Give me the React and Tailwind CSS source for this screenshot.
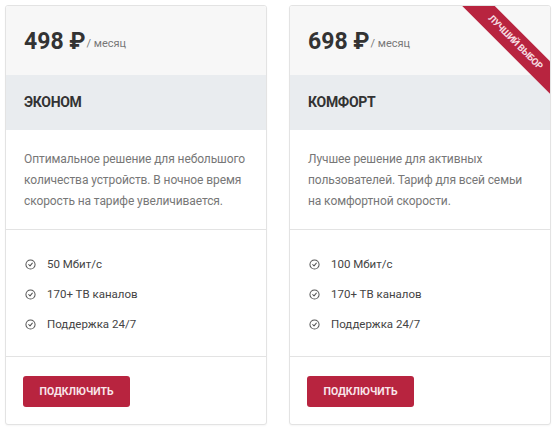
import React from "react";

function Check() {
  return (
    <svg width="11" height="11" viewBox="0 0 24 24" fill="none" stroke="#555" strokeWidth="2.2" strokeLinecap="round" strokeLinejoin="round">
      <circle cx="12" cy="12" r="10" />
      <path d="m8 12 3 3 5-6" />
    </svg>
  );
}

function Card({ price, title, lines, speed, best }) {
  return (
    <div className="relative flex h-[420px] w-[262px] flex-col overflow-hidden rounded-[3px] border border-[#e3e3e3] bg-white shadow-[0_1px_2px_rgba(0,0,0,0.04)]">
      {best && (
        <div className="absolute left-[155px] top-[25px] flex h-[23px] w-[140px] rotate-45 items-center justify-center bg-[#b8243f] text-[9.5px] font-bold uppercase tracking-[-0.4px] text-[#f6dde2]">
          Лучший выбор
        </div>
      )}
      <div className="flex h-[69px] items-center bg-[#f7f7f7] px-[18px] pt-[2px]">
        <span className="text-[23px] font-bold leading-none text-[#333]">{price} ₽</span>
        <span className="ml-[1px] self-center pt-[6px] text-[11px] text-[#777]">/ месяц</span>
      </div>
      <div className="flex h-[55px] items-center bg-[#e9ecef] px-[18px]">
        <span className="text-[14px] font-bold tracking-[-0.3px] text-[#333]">{title}</span>
      </div>
      <div className="h-[100px] whitespace-nowrap border-b border-[#e3e3e3] pl-[18px] pr-[6px] pt-[19px] text-[12px] leading-[21px] tracking-[-0.1px] text-[#777]">
        {lines.map((l) => (
          <div key={l}>{l}</div>
        ))}
      </div>
      <div className="flex h-[127px] flex-col gap-[13px] border-b border-[#e3e3e3] px-[19px] pt-[26px] text-[11.5px] text-[#444]">
        {[speed, "170+ ТВ каналов", "Поддержка 24/7"].map((t) => (
          <div key={t} className="flex h-[17px] items-center gap-[11px]">
            <Check />
            <span>{t}</span>
          </div>
        ))}
      </div>
      <div className="px-[17px] pt-[19px]">
        <button className="flex h-[31px] w-[107px] items-center justify-center rounded-[3px] bg-[#b8243f] text-[10.5px] font-bold uppercase text-[#f8e6ea]">
          Подключить
        </button>
      </div>
    </div>
  );
}

export default function App() {
  return (
    <div
      className="flex h-[430px] w-[560px] gap-[22px] bg-white pl-[5px] pt-[5px]"
      style={{ fontFamily: 'Roboto, "Noto Sans", "DejaVu Sans", sans-serif' }}
    >
      <Card
        price="498"
        title="ЭКОНОМ"
        lines={[
          "Оптимальное решение для небольшого",
          "количества устройств. В ночное время",
          "скорость на тарифе увеличивается.",
        ]}
        speed="50 Мбит/с"
      />
      <Card
        price="698"
        title="КОМФОРТ"
        lines={[
          "Лучшее решение для активных",
          "пользователей. Тариф для всей семьи",
          "на комфортной скорости.",
        ]}
        speed="100 Мбит/с"
        best
      />
    </div>
  );
}
